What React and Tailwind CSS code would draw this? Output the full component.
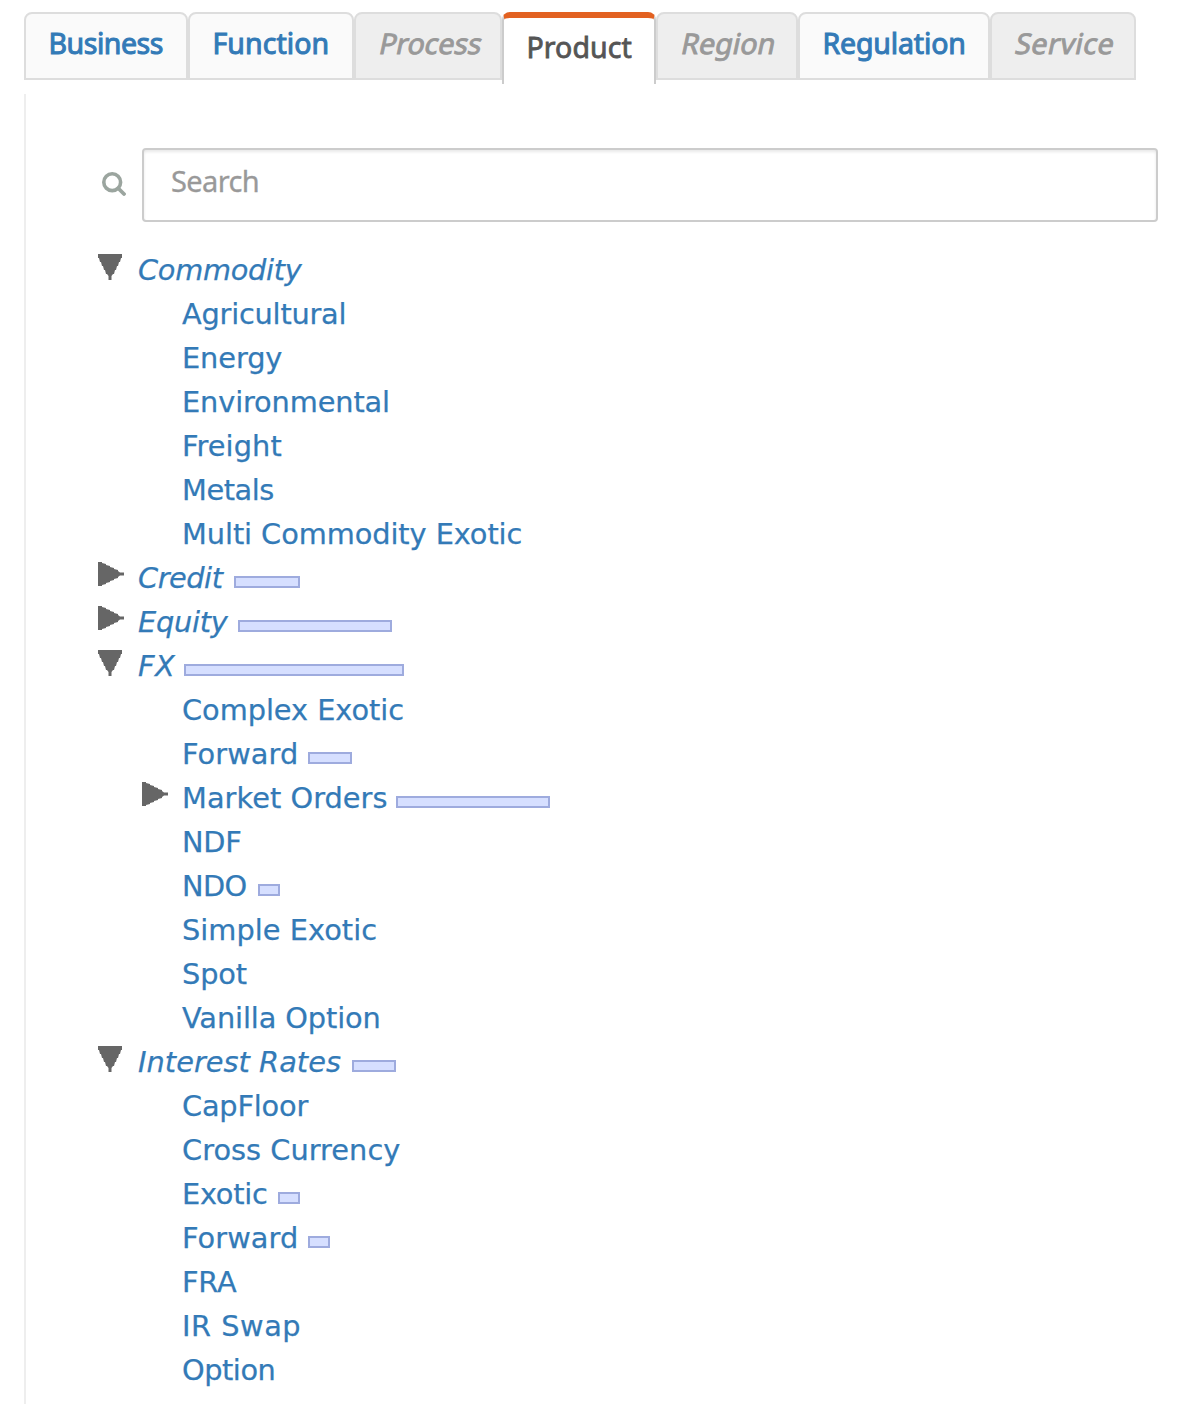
import { useLayoutEffect, useRef, useState } from "react";

const TABS = [
  { label: "Business", kind: "link", box: "w-[164px]", text: 113 },
  { label: "Function", kind: "link", box: "w-[166px]", text: 115 },
  { label: "Process", kind: "off", box: "w-[148px]", text: 101 },
  { label: "Product", kind: "active", box: "w-[154px]", text: 104 },
  { label: "Region", kind: "off", box: "w-[142px]", text: 93 },
  { label: "Regulation", kind: "link", box: "w-[192px]", text: 142 },
  { label: "Service", kind: "off", box: "w-[146px]", text: 97 },
];

const TREE = [
  { label: "Commodity", text: 163, open: true, root: true },
  { label: "Agricultural", text: 163 },
  { label: "Energy", text: 99 },
  { label: "Environmental", text: 207 },
  { label: "Freight", text: 99 },
  { label: "Metals", text: 91 },
  { label: "Multi Commodity Exotic", text: 339 },
  { label: "Credit", text: 84, open: false, root: true, slot: "w-[97px]", bar: "w-[66px]" },
  { label: "Equity", text: 89, open: false, root: true, slot: "w-[101px]", bar: "w-[154px]" },
  { label: "FX", text: 36, open: true, root: true, slot: "w-[47px]", bar: "w-[220px]" },
  { label: "Complex Exotic", text: 221 },
  { label: "Forward", text: 115, slot: "w-[127px]", bar: "w-[44px]" },
  { label: "Market Orders", text: 204, open: false, slot: "w-[215px]", bar: "w-[154px]" },
  { label: "NDF", text: 59 },
  { label: "NDO", text: 64, slot: "w-[77px]", bar: "w-[22px]" },
  { label: "Simple Exotic", text: 194 },
  { label: "Spot", text: 64 },
  { label: "Vanilla Option", text: 198 },
  { label: "Interest Rates", text: 202, open: true, root: true, slot: "w-[215px]", bar: "w-[44px]" },
  { label: "CapFloor", text: 125 },
  { label: "Cross Currency", text: 217 },
  { label: "Exotic", text: 85, slot: "w-[97px]", bar: "w-[22px]" },
  { label: "Forward", text: 115, slot: "w-[127px]", bar: "w-[22px]" },
  { label: "FRA", text: 54 },
  { label: "IR Swap", text: 118 },
  { label: "Option", text: 93 },
];

// Tracks a label so that it fills the given number of pixels.
function Tracked({ width, className = "", children }) {
  const ref = useRef(null);
  const [spacing, setSpacing] = useState(0);
  useLayoutEffect(() => {
    const natural = ref.current.offsetWidth;
    setSpacing((width + 1.5 - natural) / (children.length - 0.5));
  }, [width, children]);
  return (
    <span ref={ref} className={`inline-block whitespace-nowrap ${className}`} style={{ letterSpacing: `${spacing}px` }}>
      {children}
    </span>
  );
}

const TAB_STYLE = {
  link: "h-[68px] border-2 border-[#ddd] bg-[#fafafa] pl-[22.5px] pt-[9px] text-[#337ab7] [-webkit-text-stroke:1px_#337ab7]",
  off: "h-[68px] border-2 border-[#ddd] bg-[#eee] pl-[23.5px] pt-[9px] text-[#999] [-webkit-text-stroke:0.9px_#999]",
  active:
    "h-[72px] border-x-2 border-t-[6px] border-x-[#ccc] border-t-[#e26121] bg-white pl-[22.5px] pt-[9px] text-[#555] [-webkit-text-stroke:0.8px_#555]",
};

function Tab({ tab }) {
  return (
    <a className={`block shrink-0 rounded-t-lg text-[28.5px] leading-[40px] ${tab.box} ${TAB_STYLE[tab.kind]}`}>
      <Tracked width={tab.text} className={tab.kind === "off" ? "-skew-x-12" : ""}>
        {tab.label}
      </Tracked>
    </a>
  );
}

function Arrow({ open }) {
  return (
    <svg className="mt-1.5 size-[26px]" viewBox="0 0 26 26" fill="#666">
      {open ? (
        <path d="M0 0H24V4H23L22 8H21L20 12H19L18 16H17L16 20H15L13.5 22V26H10.5V22L9 20H8L7 16H6L5 12H4L3 8H2L1 4H0Z" />
      ) : (
        <path d="M0 0H4V1L8 2V3L12 4V5L16 6V7L20 8V9L22 10.5H26V13.5H22L20 15V16L16 17V18L12 19V20L8 21V22L4 23V24H0Z" />
      )}
    </svg>
  );
}

function Row({ node }) {
  return (
    <li className={`flex h-11 ${node.root ? "" : "pl-11"}`}>
      <div className="w-[39px] shrink-0">{node.open !== undefined && <Arrow open={node.open} />}</div>
      <a
        className={`text-[28.8px] leading-[45px] text-[#337ab7] [-webkit-text-stroke:0.25px_#337ab7] ${node.root ? "italic indent-[0.5px]" : "indent-[0.5px]"} ${node.slot || ""}`}
      >
        <Tracked width={node.text}>{node.label}</Tracked>
      </a>
      {node.bar && <div className={`mt-5 h-3 border-2 border-[#9eabde] bg-[#d6dfff] ${node.bar}`} />}
    </li>
  );
}

export default function App() {
  return (
    <div className="h-[1414px] w-[1192px] overflow-hidden bg-white pl-6 pt-3">
      <nav className="flex h-[82px] items-start font-['Noto_Sans',sans-serif]">
        {TABS.map((t) => (
          <Tab key={t.label} tab={t} />
        ))}
      </nav>
      <main className="h-[1310px] border-l-2 border-[#eee] pl-[72px] pt-[54px]">
        <div className="flex">
          <svg className="ml-1 mt-6 size-6" viewBox="0 0 24 24" fill="none" stroke="#9ba59f" strokeLinecap="round">
            <circle cx="10.2" cy="10.2" r="8.4" strokeWidth="3.6" />
            <path d="M16.5 16.5L22 22" strokeWidth="3.8" />
          </svg>
          <div className="ml-4 h-[74px] w-[1016px] rounded border-2 border-[#ccc] pl-[27px] pt-[11px] font-['Noto_Sans',sans-serif] text-[29px] leading-[40px] text-[#999] shadow-[inset_0_2px_3px_rgba(0,0,0,0.09)] [-webkit-text-stroke:0.3px_#999]">
            <Tracked width={87}>Search</Tracked>
          </div>
        </div>
        <ul className="pt-[26px] font-['DejaVu_Sans',sans-serif]">
          {TREE.map((n, i) => (
            <Row key={i} node={n} />
          ))}
        </ul>
      </main>
    </div>
  );
}
